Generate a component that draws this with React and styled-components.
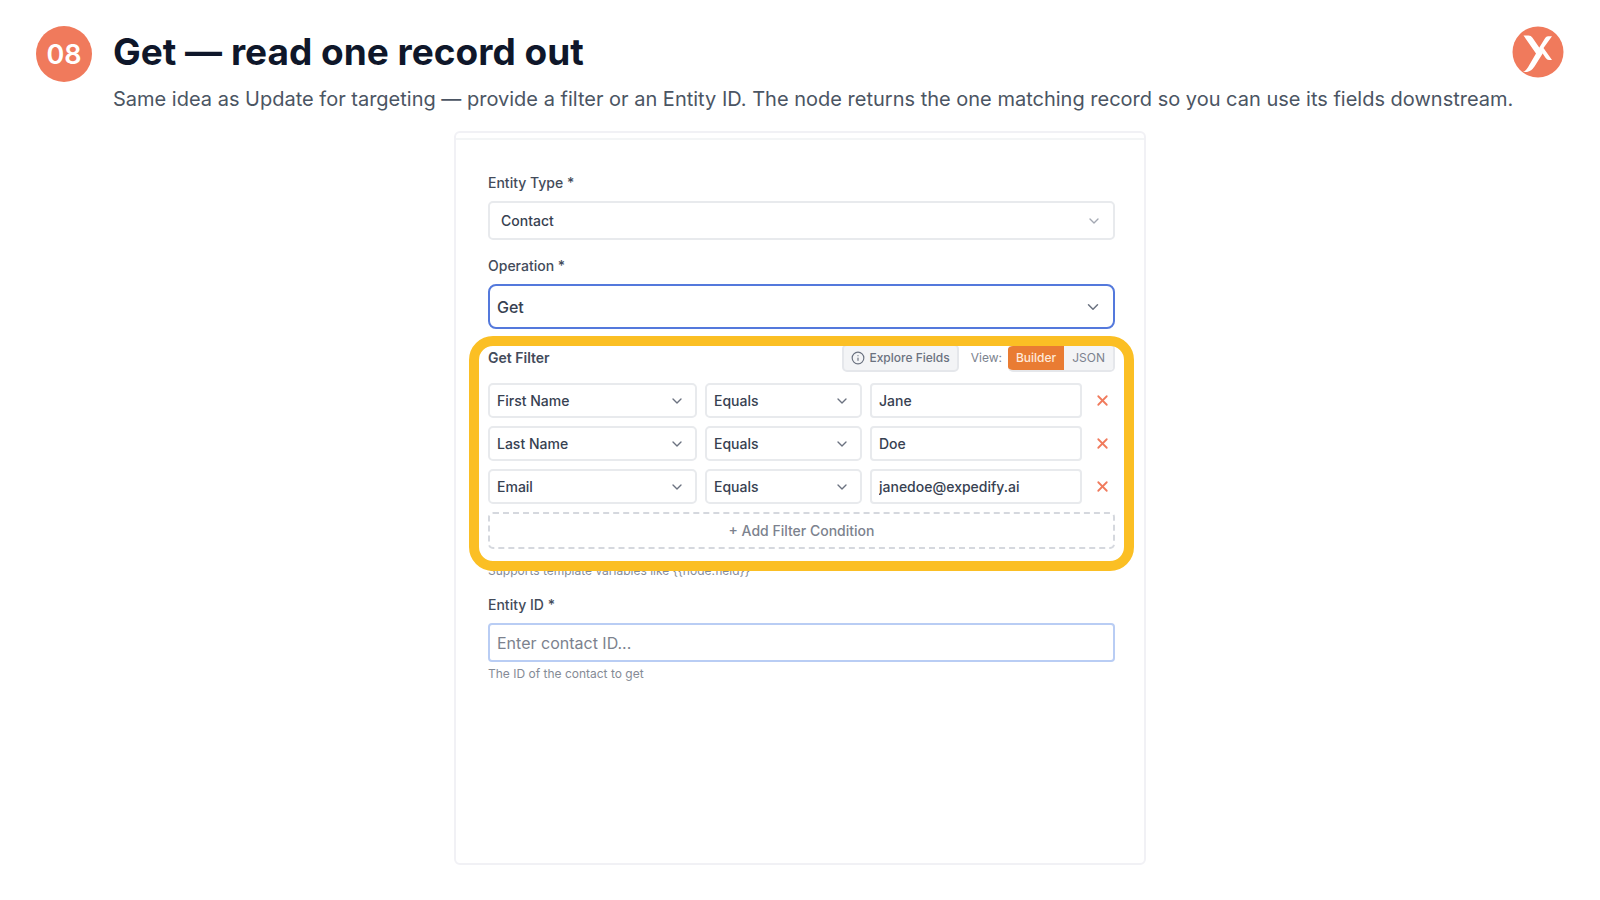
import React, { useState } from 'react';
import styled, { createGlobalStyle } from 'styled-components';
import { ChevronDown, Info, X } from 'lucide-react';

const GlobalStyle = createGlobalStyle`
  * {
    box-sizing: border-box;
  }
  body {
    margin: 0;
    background: #fff;
    font-family: Inter, 'Liberation Sans', sans-serif;
  }
  button,
  input,
  select {
    font-family: inherit;
  }
`;

const Page = styled.div`
  display: flex;
  flex-direction: column;
  min-height: 100vh;
  padding: 26px 36px 35px;
`;

const Header = styled.header`
  display: flex;
  align-items: flex-start;
  gap: 21px;
  margin-bottom: 18px;
`;

const StepNumber = styled.div`
  display: flex;
  flex: none;
  align-items: center;
  justify-content: center;
  width: 56px;
  height: 56px;
  border-radius: 50%;
  background: #f07a5c;
  color: #fff;
  font-size: 27px;
  font-weight: 600;
`;

const Heading = styled.div`
  flex: 1;
  min-width: 0;
`;

const Title = styled.h1`
  margin: 0 0 7px;
  color: #0f172a;
  font-size: 37px;
  font-weight: 700;
  line-height: 52px;
`;

const Subtitle = styled.p`
  margin: 0 -60px 0 0;
  color: #4b5563;
  font-size: 20px;
  line-height: 28px;
`;

const Logo = styled.svg`
  flex: none;
  width: 52px;
  height: 52px;
`;

const Card = styled.main`
  flex: 1;
  width: 100%;
  max-width: 692px;
  margin: 0 auto;
  border: 2px solid #f1f1f5;
  border-radius: 6px;
`;

const CardStrip = styled.div`
  height: 7px;
  border-bottom: 2px solid #f3f5f6;
`;

const Form = styled.form`
  display: flex;
  flex-direction: column;
  gap: 16px;
  padding: 33px 29px 32px 32px;
`;

const Label = styled.label`
  display: block;
  margin-bottom: 8px;
  color: #434b5a;
  font-size: 14px;
  font-weight: 500;
  line-height: 20px;
`;

const SelectWrap = styled.div`
  display: grid;
  align-items: center;

  > * {
    grid-area: 1 / 1;
  }

  svg {
    justify-self: end;
    margin-right: ${(props) => (props.$compact ? 12 : 13)}px;
    color: ${(props) => (props.$muted ? '#a3a8b2' : '#6b7280')};
    pointer-events: none;
  }
`;

const Select = styled.select`
  appearance: none;
  width: 100%;
  height: ${(props) => props.$height}px;
  padding: 0 36px 0 ${(props) => props.$indent || 7}px;
  border: 2px solid ${(props) => (props.$active ? '#5479dc' : '#e8eaed')};
  border-radius: ${(props) => (props.$active ? 8 : 5)}px;
  outline: none;
  background: #fff;
  color: #374151;
  font-size: ${(props) => (props.$active ? 16 : 14)}px;
  font-weight: 500;
`;

const TextInput = styled.input`
  width: 100%;
  height: ${(props) => props.$height}px;
  padding: 0 7px;
  border: 2px solid ${(props) => (props.$active ? '#b9cdf4' : '#e8eaed')};
  border-radius: 4px;
  outline: none;
  background: #fff;
  color: #374151;
  font-size: ${(props) => (props.$active ? 16 : 14)}px;
  font-weight: ${(props) => (props.$active ? 400 : 500)};

  &::placeholder {
    color: #7c828e;
    opacity: 1;
  }
`;

const FilterSection = styled.section`
  position: relative;
  padding-bottom: 10px;
`;

const Highlight = styled.div`
  position: absolute;
  inset: -9px -19px -12px;
  border: 10px solid #fbbf24;
  border-radius: 24px;
  pointer-events: none;
`;

const FilterHeader = styled.div`
  display: flex;
  align-items: center;
  height: 25px;
  margin-bottom: 13px;
`;

const FilterTitle = styled.h2`
  flex: 1;
  margin: 0;
  color: #434b5a;
  font-size: 14px;
  font-weight: 600;
`;

const ExploreButton = styled.button`
  display: flex;
  align-items: center;
  gap: 4px;
  height: 28px;
  padding: 0 7px;
  border: 2px solid #e5e7eb;
  border-radius: 5px;
  background: #f3f4f6;
  color: #6b7280;
  font-size: 12px;
  font-weight: 500;
`;

const ViewLabel = styled.span`
  margin: 0 6px 0 12px;
  color: #7c828e;
  font-size: 12px;
`;

const Toggle = styled.div`
  display: flex;
  height: 28px;
  overflow: hidden;
  border: 2px solid #e5e7eb;
  border-left-width: 0;
  border-radius: 5px;
`;

const ToggleButton = styled.button`
  padding: 0 8px;
  border: 0;
  background: ${(props) => (props.$on ? '#e97c33' : '#f3f4f6')};
  color: ${(props) => (props.$on ? '#ffe9da' : '#7c828e')};
  font-size: 12px;
  font-weight: ${(props) => (props.$on ? 500 : 400)};
`;

const FilterRow = styled.div`
  display: grid;
  grid-template-columns: 209fr 157fr 212fr 25px;
  align-items: center;
  gap: 8px;
  margin-bottom: 8px;
`;

const RemoveButton = styled.button`
  display: flex;
  justify-content: center;
  padding: 0;
  border: 0;
  background: none;
  color: #f07a5c;
`;

const AddButton = styled.button`
  width: 100%;
  height: 37px;
  border: 2px dashed #d5d8de;
  border-radius: 5px;
  background: #fff;
  color: #7c828e;
  font-size: 14px;
  font-weight: 500;
`;

const Help = styled.p`
  margin: ${(props) => (props.$afterFilter ? -12 : 4)}px 0 0;
  color: #858b96;
  font-size: 12px;
  line-height: 16px;
`;

const initialFilters = [
  { field: 'First Name', value: 'Jane' },
  { field: 'Last Name', value: 'Doe' },
  { field: 'Email', value: 'janedoe@expedify.ai' },
];

const fields = ['First Name', 'Last Name', 'Email'];

function BrandLogo() {
  return (
    <Logo viewBox='0 0 52 52' role='img' aria-label='Expedify'>
      <circle cx='26' cy='26' r='25.5' fill='#f07a5c' />
      <path
        d='M11.500 9.500h5q2.500 0 4 2.200L31 27 22.500 40.500q-3 4.500-7.500 5.500H11q3-1.200 5-4.700L24 27.500Z'
        fill='#fff'
      />
      <path
        d='M40 10.200h-4q-1.800 0-2.800 1.700L27 22 33.500 31.700q1.500 2.300 3.500 2.300h3L31.500 22Z'
        fill='#fff'
      />
    </Logo>
  );
}

function FilterCondition({ filter, onChange, onRemove }) {
  return (
    <FilterRow>
      <SelectWrap $compact>
        <Select
          $height={35}
          aria-label='Field'
          value={filter.field}
          onChange={(e) => onChange({ ...filter, field: e.target.value })}
        >
          {fields.map((field) => (
            <option key={field}>{field}</option>
          ))}
        </Select>
        <ChevronDown size={16} />
      </SelectWrap>
      <SelectWrap $compact>
        <Select $height={35} aria-label='Operator'>
          <option>Equals</option>
        </Select>
        <ChevronDown size={16} />
      </SelectWrap>
      <TextInput
        $height={35}
        aria-label='Value'
        value={filter.value}
        onChange={(e) => onChange({ ...filter, value: e.target.value })}
      />
      <RemoveButton type='button' aria-label='Remove condition' onClick={onRemove}>
        <X size={17} strokeWidth={2.5} />
      </RemoveButton>
    </FilterRow>
  );
}

export default function App() {
  const [filters, setFilters] = useState(initialFilters);
  const [view, setView] = useState('Builder');

  const updateFilter = (index, next) =>
    setFilters(filters.map((filter, i) => (i === index ? next : filter)));

  return (
    <Page>
      <GlobalStyle />
      <Header>
        <StepNumber>08</StepNumber>
        <Heading>
          <Title>Get — read one record out</Title>
          <Subtitle>
            Same idea as Update for targeting — provide a filter or an Entity ID. The node returns
            the one matching record so you can use its fields downstream.
          </Subtitle>
        </Heading>
        <BrandLogo />
      </Header>

      <Card>
        <CardStrip />
        <Form onSubmit={(e) => e.preventDefault()}>
          <div>
            <Label htmlFor='entity-type'>Entity Type *</Label>
            <SelectWrap $muted>
              <Select id='entity-type' $height={39} $indent={11}>
                <option>Contact</option>
              </Select>
              <ChevronDown size={16} />
            </SelectWrap>
          </div>

          <div>
            <Label htmlFor='operation'>Operation *</Label>
            <SelectWrap>
              <Select id='operation' $height={45} $active>
                <option>Get</option>
              </Select>
              <ChevronDown size={18} />
            </SelectWrap>
          </div>

          <FilterSection>
            <FilterHeader>
              <FilterTitle>Get Filter</FilterTitle>
              <ExploreButton type='button'>
                <Info size={14} />
                Explore Fields
              </ExploreButton>
              <ViewLabel>View:</ViewLabel>
              <Toggle>
                {['Builder', 'JSON'].map((name) => (
                  <ToggleButton
                    key={name}
                    type='button'
                    $on={view === name}
                    onClick={() => setView(name)}
                  >
                    {name}
                  </ToggleButton>
                ))}
              </Toggle>
            </FilterHeader>
            {filters.map((filter, index) => (
              <FilterCondition
                key={index}
                filter={filter}
                onChange={(next) => updateFilter(index, next)}
                onRemove={() => setFilters(filters.filter((_, i) => i !== index))}
              />
            ))}
            <AddButton
              type='button'
              onClick={() => setFilters([...filters, { field: 'First Name', value: '' }])}
            >
              + Add Filter Condition
            </AddButton>
            <Highlight />
          </FilterSection>
          <Help $afterFilter>Supports template variables like {'{{node.field}}'}</Help>

          <div>
            <Label htmlFor='entity-id'>Entity ID *</Label>
            <TextInput id='entity-id' $height={39} $active placeholder='Enter contact ID...' />
            <Help>The ID of the contact to get</Help>
          </div>
        </Form>
      </Card>
    </Page>
  );
}
